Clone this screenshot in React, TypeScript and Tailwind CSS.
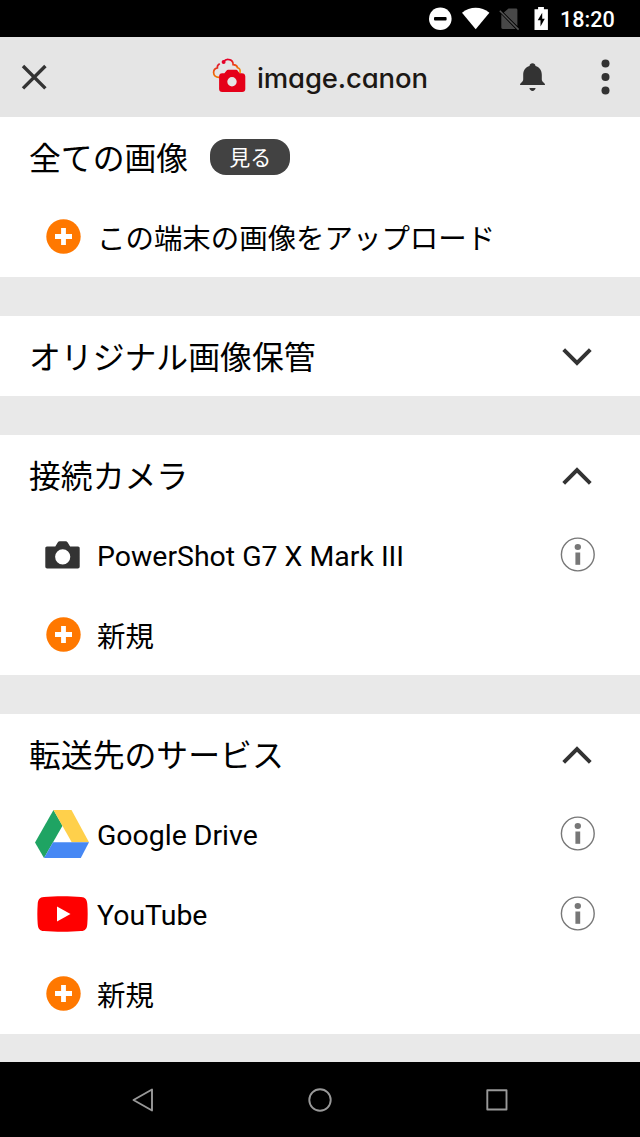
import { useState } from 'react';
import type { ReactNode } from 'react';

type SectionKey = 'originals' | 'cameras' | 'services';

function StatusBar() {
  return (
    <div className="flex h-[37px] items-center bg-black pl-[429px] text-white">
      <svg className="h-[37px] w-[126px] shrink-0" viewBox="429 0 126 37" fill="none">
        <circle cx="440.3" cy="18.7" r="11.3" fill="#fff" />
        <rect x="434" y="17" width="12.6" height="3.4" rx="1" fill="#000" />
        <path d="M475.7 29.2 462 12.7c8-6.7 19.4-6.7 27.4 0z" fill="#fff" />
        <path d="M508.5 8.5h7.5c.8 0 1.4.6 1.4 1.4v16.2L503.800 12.500zM501.300 14.200 515.600 29h-12.900c-.8 0-1.400-.6-1.400-1.400z" fill="#484848" />
        <path d="M499.8 10.7 518.6 29.6" stroke="#555" strokeWidth="1.5" />
        <path d="M534.5 9.2h3.600V7h5.800v2.200h4V30h-13.400z" fill="#fff" />
        <path d="M542.2 12.8 537.700 20.300h2.800V26.600l4.300-7.800h-2.600z" fill="#000" />
      </svg>
      <span className="ml-[5px] mt-[3px] font-['Roboto',sans-serif] text-[21.6px] leading-none font-medium">18:20</span>
    </div>
  );
}

function CanonMark() {
  return (
    <svg className="h-[36px] w-[34px]" viewBox="212 57 34 36" fill="none">
      <defs>
        <linearGradient id="cloud" x1="213" y1="76" x2="218" y2="65" gradientUnits="userSpaceOnUse">
          <stop stopColor="#f07800" />
          <stop offset="1" stopColor="#e1182b" />
        </linearGradient>
        <linearGradient id="cloudRight" x1="240" y1="72" x2="229" y2="60" gradientUnits="userSpaceOnUse">
          <stop stopColor="#f39800" />
          <stop offset="1" stopColor="#e50027" />
        </linearGradient>
      </defs>
      <path d="M219.2 77.300c-3.400.1-5.600-1.800-5.600-4.800 0-2.700 1.500-4.200 3.800-4.700-.3-1.600.3-2.800 1.900-3.700" stroke="url(#cloud)" strokeWidth="1.7" strokeLinecap="round" />
      <path d="M223.5 61.800c1.400-1.800 3.700-2.700 5.900-2.100 2.500.6 3.800 2.600 3.700 5 2.400.1 4 1.100 4.500 3 2 .6 2.900 2.300 2.400 5" stroke="url(#cloudRight)" strokeWidth="1.7" strokeLinecap="round" />
      <circle cx="223.6" cy="62" r="2" fill="#e50027" />
      <path fillRule="evenodd" d="M222.2 73.300h2.200l1.800-2.400c.6-.8 1.200-1.100 2-1.100h7.600c.8 0 1.400.3 2 1.100l1.800 2.400h2.200c2.200 0 3.500 1.200 3.500 3.300V89c0 2-1.100 3-3.100 3h-20c-2 0-3.100-1-3.100-3V76.600c0-2.100 1.200-3.300 3.100-3.300zM232 77.100a4.700 4.700 0 1 0 0 9.400 4.700 4.700 0 0 0 0-9.400z" fill="#e50019" />
    </svg>
  );
}

function Header() {
  return (
    <header className="flex h-20 items-center bg-[#e5e5e5]">
      <button className="ml-[21px]" aria-label="閉じる">
        <svg className="h-[26px] w-[26px]" viewBox="0 0 26 26" stroke="#333" strokeWidth="3.4">
          <path d="M2 2 24.400 24.400M24.400 2 2 24.400" />
        </svg>
      </button>
      <div className="ml-[165px] flex items-center">
        <div className="-mt-1">
          <CanonMark />
        </div>
        <h1 className="mt-px ml-[11px] w-[176px] font-['Inter',sans-serif] text-[27.5px] leading-10 font-[550] tracking-[-0.15px] whitespace-nowrap text-[#1c1815] [font-feature-settings:'cv11']">
          image.canon
        </h1>
      </div>
      <button className="ml-[86px]" aria-label="お知らせ">
        <svg className="h-[28px] w-[26px]" viewBox="519 63 26 28" fill="#333">
          <path d="M532.500 63.300c1.700 0 2.800 1 3 2.600 4.200 1.300 6.300 4.500 6.300 8.800v4.600c0 1.400.6 2.100 1.700 3.100 1 .9 1.500 1.400 1.500 2.600H520c0-1.200.5-1.700 1.500-2.600 1.100-1 1.700-1.700 1.700-3.100v-4.600c0-4.300 2.100-7.500 6.300-8.800.2-1.600 1.300-2.600 3-2.600zM529.400 88h6.200c-.3 1.700-1.500 2.900-3.100 2.900s-2.800-1.200-3.100-2.900z" />
        </svg>
      </button>
      <button className="ml-[56px]" aria-label="メニュー">
        <svg className="h-[36px] w-[9px]" viewBox="0 0 9 36" fill="#333">
          <circle cx="4.5" cy="4.5" r="4" />
          <circle cx="4.5" cy="18" r="4" />
          <circle cx="4.5" cy="31.5" r="4" />
        </svg>
      </button>
    </header>
  );
}

function PlusIcon() {
  return (
    <svg className="mb-[2px] ml-px h-[35px] w-[35px]" viewBox="0 0 35 35">
      <circle cx="17.5" cy="17.5" r="17.2" fill="#ff7800" />
      <path d="M17.500 9v17M9 17.500h17" stroke="#fff" strokeWidth="4.8" />
    </svg>
  );
}

function CameraIcon() {
  return (
    <svg className="h-[28px] w-[35px]" viewBox="0 0 35 28">
      <path fillRule="evenodd" d="M2 5.500h8.300L12.700 1.500C13.200.7 13.900.3 14.800.3h5.800c.9 0 1.600.4 2.100 1.200l2.400 4H33c1.100 0 1.700.7 1.700 1.800v18.300c0 1.200-.7 2-1.900 2H2.200C1 27.600.3 26.800.3 25.600V7.300C.3 6.200.9 5.500 2 5.500zM17.700 8.200a7.600 7.600 0 1 0 0 15.200 7.600 7.600 0 0 0 0-15.200z" fill="#333" />
    </svg>
  );
}

function DriveIcon() {
  return (
    <svg className="mr-[2px] h-[48px] w-[54px]" viewBox="0 0 54 48">
      <path d="M18.500 0 0 32.500 9 48 27.500 15.800z" fill="#1fa463" />
      <path d="M18.500 0H36.500L54 32.300H36.700z" fill="#ffd04b" />
      <path d="M18 32.300H54L45.800 48H9z" fill="#4688f4" />
    </svg>
  );
}

function YouTubeIcon() {
  return (
    <svg className="h-[36px] w-[51px]" viewBox="0 0 51 36">
      <path d="M7 .9C18 0 33 0 44 .9 48.500 1.200 50 3.500 50.300 8c.5 7 .5 13 0 20-.3 4.500-1.800 6.800-6.300 7.100-11 .9-26 .9-37 0C2.500 34.800 1 32.500.7 28c-.5-7-.5-13 0-20C1 3.500 2.500 1.200 7 .9z" fill="#f00" />
      <path d="M20 10.500 33.500 18 20 25.500z" fill="#fff" />
    </svg>
  );
}

function InfoIcon() {
  return (
    <svg className="mb-[2px] h-[35px] w-[35px]" viewBox="0 0 35 35">
      <circle cx="17.8" cy="17.5" r="16.4" fill="none" stroke="#777" strokeWidth="1.4" />
      <ellipse cx="17.8" cy="10" rx="3.2" ry="2.9" fill="#777" />
      <path d="M15.400 15.500h4.800v12.300h-4.800z" fill="#777" />
    </svg>
  );
}

function Chevron({ open }: { open: boolean }) {
  return (
    <svg className="h-[18px] w-[30px]" viewBox="0 0 30 18" fill="none" stroke="#333" strokeWidth="3.9">
      <path d={open ? 'M1.700 16.300 15 3l13.300 13.300' : 'M1.700 1.700 15 15 28.300 1.700'} />
    </svg>
  );
}

function Row({ icon, label, info = false }: { icon: ReactNode; label: string; info?: boolean }) {
  return (
    <div className="flex h-20 items-center pr-[45px] pl-7">
      <div className="flex w-[69px] shrink-0 justify-center">{icon}</div>
      <span className={`text-[28.45px] leading-10 whitespace-nowrap ${info ? 'mt-[3px]' : 'mt-[5px]'}`}>{label}</span>
      {info && (
        <button className="ml-auto" aria-label="情報">
          <InfoIcon />
        </button>
      )}
    </div>
  );
}

interface SectionProps {
  title: string;
  open: boolean;
  onToggle: () => void;
  children?: ReactNode;
}

function Section({ title, open, onToggle, children }: SectionProps) {
  return (
    <section className="bg-white">
      <button onClick={onToggle} className="flex h-20 w-full items-center justify-between pr-12 pl-[29px]">
        <h2 className="mt-1 text-[31.85px] leading-10">{title}</h2>
        <div className="mt-[2px]">
          <Chevron open={open} />
        </div>
      </button>
      {open && children}
    </section>
  );
}

function NavigationBar() {
  return (
    <nav className="flex h-[75px] items-center justify-between bg-black px-[131px]">
      <svg className="h-6 w-6" viewBox="0 0 24 24" fill="none" stroke="#999" strokeWidth="1.9" strokeLinejoin="round">
        <path d="M21 1.500v21L2.500 12z" />
      </svg>
      <svg className="h-6 w-6" viewBox="0 0 24 24" fill="none" stroke="#999" strokeWidth="1.9">
        <circle cx="12" cy="12" r="10.7" />
      </svg>
      <svg className="h-6 w-6" viewBox="0 0 24 24" fill="none" stroke="#999" strokeWidth="1.9" strokeLinejoin="round">
        <rect x="2.3" y="2.3" width="19.2" height="19.2" />
      </svg>
    </nav>
  );
}

export default function App() {
  const [open, setOpen] = useState<Record<SectionKey, boolean>>({
    originals: false,
    cameras: true,
    services: true,
  });

  const toggle = (key: SectionKey) => setOpen((prev) => ({ ...prev, [key]: !prev[key] }));

  return (
    <div lang="ja" className="flex h-[1137px] w-[640px] flex-col overflow-hidden bg-[#e9e9e9] font-['Roboto','Noto_Sans_CJK_JP',sans-serif] text-black">
      <StatusBar />
      <Header />

      <main className="flex flex-1 flex-col gap-[39px]">
        <section className="bg-white">
          <div className="flex h-20 items-center pl-[29px]">
            <h2 className="mt-1 text-[31.85px] leading-10">全ての画像</h2>
            <button className="ml-[22px] flex h-9 w-20 items-center justify-center rounded-2xl bg-[#424242] pt-[3px] text-[21px] text-white">
              見る
            </button>
          </div>
          <Row icon={<PlusIcon />} label="この端末の画像をアップロード" />
        </section>

        <Section title="オリジナル画像保管" open={open.originals} onToggle={() => toggle('originals')} />

        <Section title="接続カメラ" open={open.cameras} onToggle={() => toggle('cameras')}>
          <Row icon={<CameraIcon />} label="PowerShot G7 X Mark III" info />
          <Row icon={<PlusIcon />} label="新規" />
        </Section>

        <Section title="転送先のサービス" open={open.services} onToggle={() => toggle('services')}>
          <Row icon={<DriveIcon />} label="Google Drive" info />
          <Row icon={<YouTubeIcon />} label="YouTube" info />
          <Row icon={<PlusIcon />} label="新規" />
        </Section>
      </main>

      <NavigationBar />
    </div>
  );
}
